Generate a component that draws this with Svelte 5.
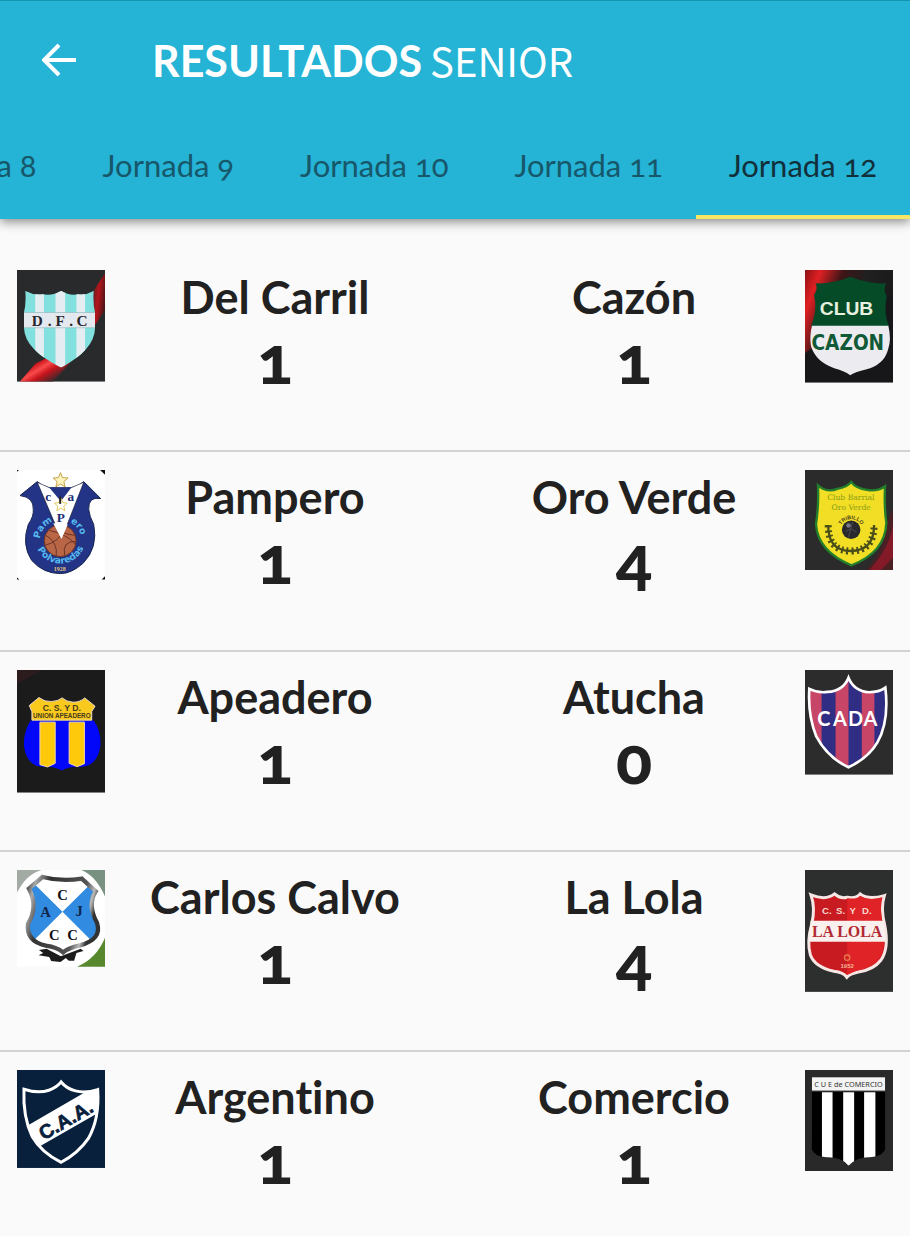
<script lang="ts">
	interface Club {
		name: string;
		goals: number;
		crest: string;
		box: string;
	}

	interface Match {
		home: Club;
		away: Club;
	}

	const rounds = [8, 9, 10, 11, 12];
	let selected = $state(12);

	const matches: Match[] = [
		{
			home: { name: 'Del Carril', goals: 1, crest: 'carril', box: '21 30 265 336' },
			away: { name: 'Cazón', goals: 1, crest: 'cazon', box: '27 30 265 339' }
		},
		{
			home: { name: 'Pampero', goals: 1, crest: 'pampero', box: '21 26 265 330' },
			away: { name: 'Oro Verde', goals: 4, crest: 'oroverde', box: '27 26 265 302' }
		},
		{
			home: { name: 'Apeadero', goals: 1, crest: 'apeadero', box: '21 25 265 369' },
			away: { name: 'Atucha', goals: 0, crest: 'atucha', box: '27 25 265 315' }
		},
		{
			home: { name: 'Carlos Calvo', goals: 1, crest: 'calvo', box: '21 26 265 291' },
			away: { name: 'La Lola', goals: 4, crest: 'lola', box: '27 25 265 367' }
		},
		{
			home: { name: 'Argentino', goals: 1, crest: 'argentino', box: '21 24 265 295' },
			away: { name: 'Comercio', goals: 1, crest: 'comercio', box: '27 25 265 305' }
		}
	];
</script>

{#snippet crest(club: Club)}
	<svg class="crest" viewBox={club.box} role="img" aria-label={club.name}>
		{#if club.crest === 'carril'}
			<defs>
				<linearGradient id="carril-right" x1="0" y1="0.3" x2="1" y2="0.7">
					<stop offset="0" stop-color="#292a2b" />
					<stop offset="0.5" stop-color="#b5151b" />
					<stop offset="1" stop-color="#3a1719" />
				</linearGradient>
				<linearGradient id="carril-left" x1="0" y1="0.1" x2="0.8" y2="0.9">
					<stop offset="0.1" stop-color="#292a2b" />
					<stop offset="0.4" stop-color="#c9141c" />
					<stop offset="0.55" stop-color="#fa4b4b" />
					<stop offset="0.7" stop-color="#c9141c" />
					<stop offset="1" stop-color="#292a2b" />
				</linearGradient>
				<clipPath id="carril-clip">
					<path d="M46 93Q72 107 98 103Q130 108 154 93Q178 108 206 103Q230 106 252 93Q249 130 256 158V205Q255 270 154 324Q44 270 42 205V158Q49 130 46 93Z" />
				</clipPath>
			</defs>
			<rect x="21" y="30" width="265" height="336" fill="#292a2b" />
			<path d="M286 40V150L240 220V110Z" fill="url(#carril-right)" />
			<path d="M30 366L76 312L150 275L180 310L130 366Z" fill="url(#carril-left)" />
			<g clip-path="url(#carril-clip)">
				<rect x="40" y="80" width="220" height="250" fill="#82e1de" />
				<path d="M76 80h26v250H76zM137 80h29v250h-29zM200 80h26v250h-26z" fill="#e6edf2" />
				<rect x="40" y="158" width="220" height="46" fill="#e3e9ee" />
				<path d="M40 158H260M40 204H260" stroke="#91b9bd" stroke-width="2" />
			</g>
			<g class="serif" font-size="46" fill="#26262b">
				<text x="82" y="199">D</text>
				<text x="119" y="199">.</text>
				<text x="151" y="199">F</text>
				<text x="184" y="199">.</text>
				<text x="217" y="199">C</text>
			</g>
		{:else if club.crest === 'cazon'}
			<defs>
				<linearGradient id="cazon-bg" x1="0" y1="0" x2="1" y2="0.35">
					<stop offset="0" stop-color="#8d1015" />
					<stop offset="0.16" stop-color="#df2023" />
					<stop offset="0.4" stop-color="#3c1517" />
					<stop offset="0.65" stop-color="#202020" />
					<stop offset="1" stop-color="#19191b" />
				</linearGradient>
			</defs>
			<rect x="27" y="30" width="265" height="339" fill="#171719" />
			<path d="M27 30H292V100L27 280Z" fill="url(#cazon-bg)" />
			<path d="M58 70Q84 72 110 66Q140 60 164 50Q188 60 218 66Q245 72 272 70Q260 88 273 108Q263 160 280 200H45Q66 145 54 105Q68 85 58 70Z" fill="#064b27" />
			<path d="M48 198H278Q288 240 277 270Q265 315 210 330Q180 337 163 347Q148 335 115 326Q60 307 45 260Q40 230 48 198Z" fill="#ecebef" />
			<text x="152" y="165" font-size="58" fill="#e6f1df">CLUB</text>
			<text class="condensed" x="156" y="270" font-size="62" fill="#105a37">CAZON</text>
		{:else if club.crest === 'pampero'}
			<defs>
				<path id="pampero-left" d="M89 237A62 62 0 0 1 132 181" />
				<path id="pampero-right" d="M172 181A62 62 0 0 1 216 232" />
				<path id="pampero-under" d="M80 258A76 76 0 0 0 224 254" />
			</defs>
			<rect x="21" y="26" width="265" height="330" fill="#fff" />
			<path d="M271 26H286V40ZM21 26H27L21 31ZM21 350V356H28ZM276 356L286 346V356Z" fill="#111" />
			<path d="M30 103L82 61Q100 78 118 79H185Q205 78 222 61L273 112Q235 105 237 145Q239 165 252 190Q266 260 220 307Q185 338 152 338Q100 338 65 298Q34 250 55 190Q72 165 70 145Q72 108 30 103Z" fill="#233486" stroke="#17234f" stroke-width="3" />
			<path d="M82 63L118 79H185L222 63L155 234Z" fill="#fff" stroke="#161d3a" stroke-width="2" />
			<path d="M118 79H185L153 120Z" fill="#233486" />
			<circle cx="151" cy="239" r="48" fill="#b96647" stroke="#6b3326" stroke-width="3" />
			<path d="M107 222Q145 243 139 286M107 252Q145 245 170 197M119 208Q170 219 198 250M142 191Q145 219 198 223M165 284Q155 240 198 241" fill="none" stroke="#6b3326" stroke-width="3" />
			<path d="M130 186L155 234L174 190Z" fill="#fff" />
			<path d="M152 34L158 49L175 50L162 61L166 77L152 68L138 77L142 61L130 50L146 49Z" fill="#fff4bd" stroke="#c4a34a" stroke-width="3" />
			<path d="M153 110L159 124L172 126L162 135L165 149L153 141L141 149L144 135L134 126L147 124Z" fill="#fff" stroke="#e0c75e" stroke-width="3" />
			<path d="M151 106V128" stroke="#222" stroke-width="6" />
			<g class="serif" font-size="40" fill="#202e76">
				<text x="115" y="120">c</text>
				<text x="183" y="120">a</text>
				<text x="153" y="182">P</text>
			</g>
			<g class="script" font-size="28" fill="#55b8ef">
				<text><textPath href="#pampero-left" startOffset="50%">Pam</textPath></text>
				<text><textPath href="#pampero-right" startOffset="50%">ero</textPath></text>
				<text><textPath href="#pampero-under" startOffset="50%">Polvaredas</textPath></text>
			</g>
			<text class="serif" x="150" y="330" font-size="18" fill="#e5c57a">1928</text>
		{:else if club.crest === 'oroverde'}
			<defs>
				<path id="oro-arc" d="M131 209A35 35 0 0 1 201 209" />
			</defs>
			<rect x="27" y="26" width="265" height="302" fill="#2b2b2b" />
			<path d="M292 145V328H210Q270 265 270 190Z" fill="#4a2024" />
			<path d="M292 190V290L255 328H220Q280 265 292 190Z" fill="#841a28" />
			<path d="M66 72Q94 96 124 83Q155 78 166 62Q180 82 214 86Q244 92 268 75Q265 140 272 185Q269 274 167 313Q66 272 60 190Q69 130 66 72Z" fill="#f2df25" stroke="#237f2c" stroke-width="7" />
			<g class="slab" fill="#8a9b16">
				<text x="165" y="115" font-size="23">Club Barrial</text>
				<text x="166" y="145" font-size="23">Oro Verde</text>
			</g>
			<text font-size="16" fill="#49391f"><textPath href="#oro-arc" startOffset="50%">TRIBILLO</textPath></text>
			<circle cx="166" cy="206" r="28" fill="#29282c" />
			<circle cx="158" cy="193" r="7" fill="#777783" />
			<path d="M150 211l15-8 17 10M165 203l5-20M158 228l7-25" fill="none" stroke="#4b4b56" stroke-width="3" />
			<path d="M97 192Q96 270 165 270Q235 270 235 192" fill="none" stroke="#494d19" stroke-width="7" />
			<path d="M97 192Q96 270 165 270Q235 270 235 192" fill="none" stroke="#494d19" stroke-width="21" stroke-dasharray="6 9" />
		{:else if club.crest === 'apeadero'}
			<rect x="21" y="25" width="265" height="369" fill="#1b1b1b" />
			<path d="M21 25H96L21 67Z" fill="#2c1c1e" />
			<path d="M62 177H252Q275 210 272 254Q263 316 211 317Q178 315 157 328Q130 314 102 317Q50 316 42 255Q40 212 62 177Z" fill="#0207fa" />
			<path d="M90 182H136V306L113 317L90 310ZM178 182H224V307L202 316L178 306Z" fill="#ffc90b" stroke="#f0d6ac" stroke-width="3" />
			<path d="M58 132L87 108Q105 122 125 120Q145 119 157 109Q170 121 190 122Q211 122 225 109L256 134L246 150V176H66V151Z" fill="#fac91d" stroke="#e8d8ca" stroke-width="3" />
			<text x="156" y="149" font-size="26" fill="#463b20">C. S. Y D.</text>
			<text x="156" y="171" font-size="19" fill="#463b20">UNION APEADERO</text>
		{:else if club.crest === 'atucha'}
			<defs>
				<clipPath id="atucha-clip">
					<path d="M40 82Q65 95 95 91Q142 88 158 48Q174 88 220 92Q250 92 269 78Q281 180 245 243Q218 290 158 318Q95 289 61 225Q35 160 40 82Z" />
				</clipPath>
			</defs>
			<rect x="27" y="25" width="265" height="315" fill="#2c2c2d" />
			<g clip-path="url(#atucha-clip)">
				<rect x="27" y="40" width="265" height="290" fill="#302d84" />
				<path d="M30 40h47v290H30zM119 40h39v290h-39zM198 40h38v290h-38z" fill="#c74567" />
			</g>
			<path d="M40 82Q65 95 95 91Q142 88 158 48Q174 88 220 92Q250 92 269 78Q281 180 245 243Q218 290 158 318Q95 289 61 225Q35 160 40 82Z" fill="none" stroke="#fff" stroke-width="8" />
			<g class="lato" font-size="60" fill="#fff">
				<text x="84" y="195">C</text>
				<text x="132" y="195">A</text>
				<text x="179" y="195">D</text>
				<text x="224" y="195">A</text>
			</g>
		{:else if club.crest === 'calvo'}
			<defs>
				<linearGradient id="calvo-edge" x1="0" y1="0" x2="1" y2="0.3">
					<stop offset="0" stop-color="#333" />
					<stop offset="0.12" stop-color="#aaa" />
					<stop offset="0.3" stop-color="#333" />
					<stop offset="0.8" stop-color="#555" />
					<stop offset="0.92" stop-color="#bbb" />
					<stop offset="1" stop-color="#333" />
				</linearGradient>
				<clipPath id="calvo-clip">
					<path d="M57 82L98 47Q155 62 216 52L258 90Q232 130 262 185Q278 235 210 253Q175 261 160 274Q142 259 108 254Q48 241 54 188Q86 135 57 82Z" />
				</clipPath>
			</defs>
			<rect x="21" y="26" width="265" height="291" fill="#fff" />
			<path d="M21 26H95Q50 38 21 94Z" fill="#a3aaa3" />
			<path d="M215 26H286V106Q260 45 215 26Z" fill="#789181" />
			<path d="M286 230V317H202Q260 293 286 230Z" fill="#58882e" />
			<path d="M87 267L110 263L153 286L213 263L221 270L200 276L193 299H177L168 291L152 303L124 300L118 288L86 283L100 276Z" fill="#1c1c1c" />
			<g clip-path="url(#calvo-clip)">
				<rect x="40" y="40" width="240" height="240" fill="#fff" />
				<path d="M40 35L158 152L40 270ZM276 35L158 152L276 270Z" fill="#318be1" />
			</g>
			<path d="M57 82L98 47Q155 62 216 52L258 90Q232 130 262 185Q278 235 210 253Q175 261 160 274Q142 259 108 254Q48 241 54 188Q86 135 57 82Z" fill="none" stroke="url(#calvo-edge)" stroke-width="13" />
			<g class="serif" font-size="44" fill="#101014">
				<text x="158" y="117">C</text>
				<text x="107" y="167" fill="#10264c">A</text>
				<text x="208" y="166" fill="#10264c">J</text>
				<text x="133" y="236">C</text>
				<text x="188" y="236">C</text>
			</g>
		{:else if club.crest === 'lola'}
			<rect x="27" y="25" width="265" height="367" fill="#2d2e2e" />
			<path d="M45 100Q90 118 116 97Q133 113 154 107Q180 112 193 97Q218 116 266 102Q254 140 267 190Q281 260 256 296Q234 325 188 332Q161 337 153 348Q142 333 114 330Q55 316 43 280Q32 242 47 188Q59 140 45 100Z" fill="#c81a21" stroke="#f6e7e5" stroke-width="9" />
			<path d="M154 109Q181 115 193 103Q218 119 260 107Q250 140 262 190Q274 260 250 293Q228 320 184 328L154 341Z" fill="#df2327" />
			<path d="M44 178H265L270 241H38Z" fill="#faf0ee" />
			<g font-size="29" fill="#f7d8cf">
				<text x="93" y="159">C.</text>
				<text x="134" y="159">S.</text>
				<text x="171" y="159">Y</text>
				<text x="213" y="159">D.</text>
			</g>
			<text class="serif" x="154" y="226" font-size="48" fill="#b12932">LA LOLA</text>
			<circle cx="154" cy="289" r="8" fill="none" stroke="#e7784c" stroke-width="4" />
			<text x="154" y="320" font-size="18" fill="#f3b595">1952</text>
		{:else if club.crest === 'argentino'}
			<defs>
				<clipPath id="argentino-clip">
					<path d="M42 82Q85 96 117 85Q142 76 154 60Q170 80 197 87Q228 95 264 83Q270 170 236 230Q206 274 154 302Q95 273 67 225Q38 165 42 82Z" />
				</clipPath>
			</defs>
			<rect x="21" y="24" width="265" height="295" fill="#08203c" />
			<g clip-path="url(#argentino-clip)">
				<path d="M48 194L235 86H280V145L82 258Z" fill="#fff" />
			</g>
			<path d="M42 82Q85 96 117 85Q142 76 154 60Q170 80 197 87Q228 95 264 83Q270 170 236 230Q206 274 154 302Q95 273 67 225Q38 165 42 82Z" fill="none" stroke="#fff" stroke-width="9" />
			<text x="168" y="195" font-size="59" fill="#08203c" stroke="#08203c" stroke-width="2" transform="rotate(-30 168 174)">C.A.A.</text>
		{:else}
			<defs>
				<clipPath id="comercio-clip">
					<path d="M48 91H269V264Q260 286 222 288Q184 287 158 313Q137 287 91 288Q55 286 47 263Z" />
				</clipPath>
			</defs>
			<rect x="27" y="25" width="265" height="305" fill="#292929" />
			<g clip-path="url(#comercio-clip)">
				<rect x="40" y="90" width="240" height="230" fill="#000" />
				<path d="M78 92h32v230H78zM142 92h33v230h-33zM205 92h34v230h-34z" fill="#fff" />
			</g>
			<rect x="48" y="47" width="220" height="40" fill="#f3f3f3" />
			<text class="plain" x="158" y="75" font-size="22" fill="#333">C U E de COMERCIO</text>
		{/if}
	</svg>
{/snippet}

{#snippet team(club: Club)}
	<div class="team">
		<h2>{club.name}</h2>
		<p class="goals">{club.goals}</p>
	</div>
{/snippet}

<div class="page">
	<header>
		<div class="toolbar">
			<button class="back" aria-label="Volver">
				<svg viewBox="0 0 34 34">
					<path d="M17 2L2 17L17 32M2 17H34" />
				</svg>
			</button>
			<h1><strong>RESULTADOS</strong><span>SENIOR</span></h1>
		</div>
		<nav>
			{#each rounds as round}
				<button class="tab" class:active={round === selected} onclick={() => (selected = round)}>
					Jornada {round}
				</button>
			{/each}
		</nav>
	</header>

	<main>
		{#each matches as match}
			<article>
				{@render crest(match.home)}
				{@render team(match.home)}
				{@render team(match.away)}
				{@render crest(match.away)}
			</article>
		{/each}
	</main>
</div>

<style>
	:global(body) {
		margin: 0;
		background: #fafafa;
	}

	.page {
		overflow: hidden;
		font-family: Lato, 'Open Sans', sans-serif;
		font-variant-ligatures: none;
		color: #212121;
	}

	header {
		background: #25b3d6;
		border-top: 1px solid #1494b0;
		box-shadow: 0 3px 10px rgba(0, 0, 0, 0.45);
	}

	.toolbar {
		display: flex;
		align-items: center;
		gap: 76px;
		height: 118px;
		padding: 0 42px;
	}

	button {
		border: 0;
		padding: 0;
		background: none;
		font-family: inherit;
		cursor: pointer;
	}

	.back {
		width: 34px;
		height: 34px;
	}

	.back svg {
		display: block;
		fill: none;
		stroke: #fff;
		stroke-width: 4;
	}

	h1 {
		display: flex;
		align-items: baseline;
		gap: 8px;
		margin: 0;
		font-size: 43px;
		line-height: 56px;
		font-weight: 400;
		color: #fff;
		white-space: nowrap;
	}

	h1 strong {
		font-weight: 700;
	}

	h1 span {
		font-family: 'Noto Sans CJK JP', sans-serif;
		font-size: 40px;
	}

	nav {
		display: flex;
		justify-content: flex-end;
		overflow: hidden;
	}

	.tab {
		flex: none;
		height: 100px;
		padding: 0 33px 4px;
		border-bottom: 4px solid transparent;
		font-size: 31px;
		font-weight: 400;
		font-variant-numeric: oldstyle-nums;
		color: #17576a;
	}

	.tab.active {
		border-color: #f5e663;
		color: #12303a;
	}

	main {
		padding-top: 33px;
	}

	article {
		display: grid;
		grid-template-columns: 88px 1fr 1fr 88px;
		align-items: start;
		box-sizing: border-box;
		min-height: 200px;
		padding: 18px 17px 0;
		border-bottom: 2px solid #d2d2d2;
	}

	article:last-child {
		border-bottom: 0;
		min-height: 184px;
	}

	.crest {
		display: block;
		width: 100%;
	}

	.crest text {
		font-family: 'Liberation Sans', sans-serif;
		font-weight: 700;
		text-anchor: middle;
	}

	.crest text.serif,
	.crest .serif text {
		font-family: 'Liberation Serif', serif;
	}

	.crest .slab text {
		font-family: 'DejaVu Serif', serif;
		font-weight: 400;
	}

	.crest .script text {
		font-family: 'DejaVu Sans', sans-serif;
	}

	.crest text.condensed {
		font-family: 'DejaVu Sans Condensed', 'Liberation Sans', sans-serif;
	}

	.crest .lato text {
		font-family: Lato, sans-serif;
	}

	.crest text.plain {
		font-family: 'Noto Sans', sans-serif;
		font-weight: 400;
	}

	.team {
		padding-right: 10px;
		text-align: center;
	}

	.team + .team {
		padding: 0 0 0 8px;
	}

	h2 {
		margin: 0;
		font-size: 45px;
		line-height: 54px;
		font-weight: 700;
	}

	.goals {
		margin: 0;
		font-size: 67px;
		line-height: 68px;
		font-weight: 900;
		font-variant-numeric: oldstyle-nums;
	}
</style>
